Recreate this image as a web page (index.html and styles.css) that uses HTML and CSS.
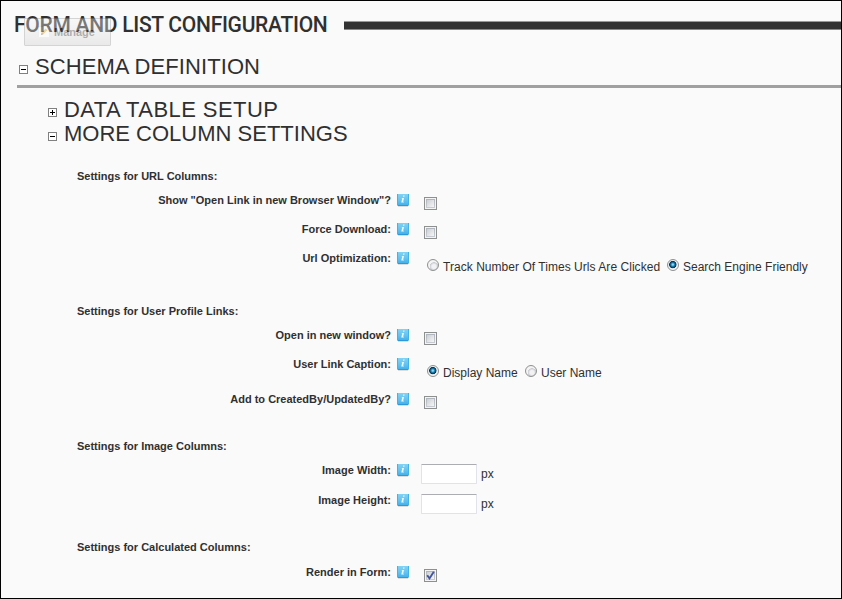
FILE: index.html
```
<!DOCTYPE html>
<html lang="en">
<head>
<meta charset="utf-8">
<title>Form and List Configuration</title>
<link rel="stylesheet" href="styles.css">
</head>
<body>
<svg class="defs" width="0" height="0" aria-hidden="true">
  <defs>
    <linearGradient id="blue" x1="0" y1="0" x2="0" y2="1"><stop offset="0" stop-color="#82d2f2"/><stop offset=".55" stop-color="#62c2f0"/><stop offset="1" stop-color="#3fadea"/></linearGradient>
    <symbol id="info" viewBox="0 0 14 14">
      <path d="M2 12.5H12" stroke="#dcdcdc"/>
      <path d="M1 0H13V11.3L12 12H2L1 11.3Z" fill="url(#blue)"/>
      <path d="M1.5 0V11M12.5 0V11" stroke="#43b2e8"/>
      <path d="M2 11.5H12" stroke="#2d98da"/>
      <path d="M7.2 1.5h1.4l-.3 1.3H6.9zM5.9 4h2.2L7.1 7.8h.9l-.2.8H5.2l1-3.8h-.5z" fill="#e6f7fe"/>
    </symbol>
  </defs>
</svg>
<main class="page">
  <header class="title">
    <h1>FORM AND LIST CONFIGURATION</h1>
    <div class="bar"></div>
    <div class="manage">
      <svg width="12" height="12" viewBox="0 0 12 12"><rect x=".5" y=".5" width="11" height="11" fill="#fff" stroke="#ddd"/><path d="M3 9l.7-2.4 4-4 1.7 1.7-4 4z" fill="#d99520"/><path d="M3 9l.7-2.4 1.7 1.7z" fill="#555"/></svg>
      <span>Manage</span>
    </div>
  </header>
  <h2 class="fold schema"><i class="box"></i><span>SCHEMA DEFINITION</span></h2>
  <h2 class="fold sub"><i class="box plus"></i><span class="data">DATA TABLE SETUP</span></h2>
  <h2 class="fold sub more"><i class="box"></i><span>MORE COLUMN SETTINGS</span></h2>

  <section class="group url">
    <h3>Settings for URL Columns:</h3>
    <div class="row"><b>Show "Open Link in new Browser Window"?</b><svg class="info"><use href="#info"/></svg><i class="check"></i></div>
    <div class="row"><b>Force Download:</b><svg class="info"><use href="#info"/></svg><i class="check"></i></div>
    <div class="row"><b>Url Optimization:</b><svg class="info"><use href="#info"/></svg>
      <div class="radios"><i class="radio"></i><span class="track">Track Number Of Times Urls Are Clicked</span><i class="radio on"></i><span>Search Engine Friendly</span></div></div>
  </section>
  <section class="group profile">
    <h3>Settings for User Profile Links:</h3>
    <div class="row"><b>Open in new window?</b><svg class="info"><use href="#info"/></svg><i class="check"></i></div>
    <div class="row tall"><b>User Link Caption:</b><svg class="info"><use href="#info"/></svg>
      <div class="radios"><i class="radio on"></i><span class="display">Display Name</span><i class="radio"></i><span>User Name</span></div></div>
    <div class="row"><b>Add to CreatedBy/UpdatedBy?</b><svg class="info"><use href="#info"/></svg><i class="check"></i></div>
  </section>
  <section class="group image">
    <h3>Settings for Image Columns:</h3>
    <div class="row field"><b>Image Width:</b><svg class="info"><use href="#info"/></svg><div class="size"><input type="text" aria-label="Image Width"><span>px</span></div></div>
    <div class="row field"><b>Image Height:</b><svg class="info"><use href="#info"/></svg><div class="size"><input type="text" aria-label="Image Height"><span>px</span></div></div>
  </section>
  <section class="group calc">
    <h3>Settings for Calculated Columns:</h3>
    <div class="row"><b>Render in Form:</b><svg class="info"><use href="#info"/></svg><i class="check"><svg width="9" height="9" viewBox="0 0 9 9"><path d="M1.2 4.3L3.5 7.4 7.8.8" fill="none" stroke="#42559c" stroke-width="1.9"/></svg></i></div>
  </section>
</main>
</body>
</html>
```
FILE: styles.css
```
* { box-sizing: border-box; }
body { margin: 0; background: #fafafa; color: #303030; font-family: "Liberation Sans", Arial, sans-serif; }
.defs { display: block; height: 0; }
.page { width: 842px; height: 599px; border: 1px solid #000; overflow: hidden; }
h1, h2, h3 { margin: 0; font-weight: 400; white-space: nowrap; }

.title { position: relative; display: flex; height: 51px; padding-left: 13px; }
h1 { width: 330px; padding-top: 9px; font: 500 22px/30px Roboto, sans-serif; letter-spacing: -.3px; transform: scaleX(.956); transform-origin: 0 0; }
.bar { flex: 1; height: 9px; margin-top: 20px; background: #333; border-top: 1px solid #999; border-bottom: 1px solid #888; }
.manage { position: absolute; left: 23px; top: 17px; width: 87px; height: 28px; display: flex; align-items: center; gap: 4px; padding-left: 13px; border: 1px solid #999; border-radius: 1px; background: linear-gradient(#f5f5f5, #d0d0d0); opacity: .38; font-size: 11px; font-weight: 700; color: #333; }

.fold { display: flex; font-size: 22px; line-height: 24px; }
.fold span { padding-top: 1px; }
.schema { height: 36px; margin-left: 16px; padding: 2px 0 0 2px; border-bottom: 3px solid #a0a0a0; letter-spacing: .08px; }
.schema .box { margin: 11px 7px 0 0; }
.sub { height: 24px; margin-left: 47px; }
.sub .box { margin: 11px 7px 0 0; }
.schema + .sub { margin-top: 9px; }
.data { letter-spacing: .43px; }
.box { position: relative; flex: none; width: 9px; height: 9px; border: 1px solid #808080; background: linear-gradient(#000, #000) center / 5px 1px no-repeat #fff; }
.plus { background: linear-gradient(#000, #000) center / 5px 1px no-repeat, linear-gradient(#000, #000) center / 1px 5px no-repeat, #fff; }
.more { margin-bottom: 25px; }

.group { font-size: 11px; }
h3 { height: 24px; margin-left: 76px; font-size: 11px; line-height: 12px; font-weight: 700; }
.row { display: grid; grid-template-columns: 390px 30px 1fr; height: 29px; white-space: nowrap; }
.row b { text-align: right; line-height: 12px; }
.info { width: 14px; height: 14px; margin-left: 5px; }
.check { width: 13px; height: 13px; margin: 3px 0 0 3px; border: 1px solid #8e8f8f; background: linear-gradient(135deg, #cbcfd5, #f6f6f6) center / 7px 7px no-repeat, linear-gradient(#b0b5bd, #c8ccd2) center / 9px 9px no-repeat, #f4f4f4; display: grid; place-items: center; }
.check svg { display: block; }
.radios { display: flex; height: 14px; margin: 8px 0 0 6px; font-size: 12px; line-height: 14px; }
.radio { flex: none; width: 12px; height: 12px; margin: -1px 4px 0 0; border: 1px solid #8e8f8f; border-radius: 50%; background: radial-gradient(circle at 60% 65%, #f2f2f2 0 2px, #c8ccd1 4px, #f4f4f4 4.5px); }
.radio.on { background: radial-gradient(circle at 48% 46%, #8fd6f2 0 .6px, #1684b8 1.8px, #0b2b45 3.3px, #e8edf0 4px, #f4f4f4 5px); }
.track { width: 224px; letter-spacing: .04px; }
.tall { height: 35px; }
.display { width: 82px; }
.size { display: flex; font-size: 12px; line-height: 20px; }
.size input { width: 56px; height: 20px; margin: 0 4px 0 0; padding: 0; border: 1px solid #e2e3ea; border-top-color: #abadb3; border-radius: 1px; background: #fff; }
.field { height: 30px; }
.url { height: 135px; }
.profile { height: 135px; }
.image { height: 101px; }
.calc h3 { height: 25px; }
```
